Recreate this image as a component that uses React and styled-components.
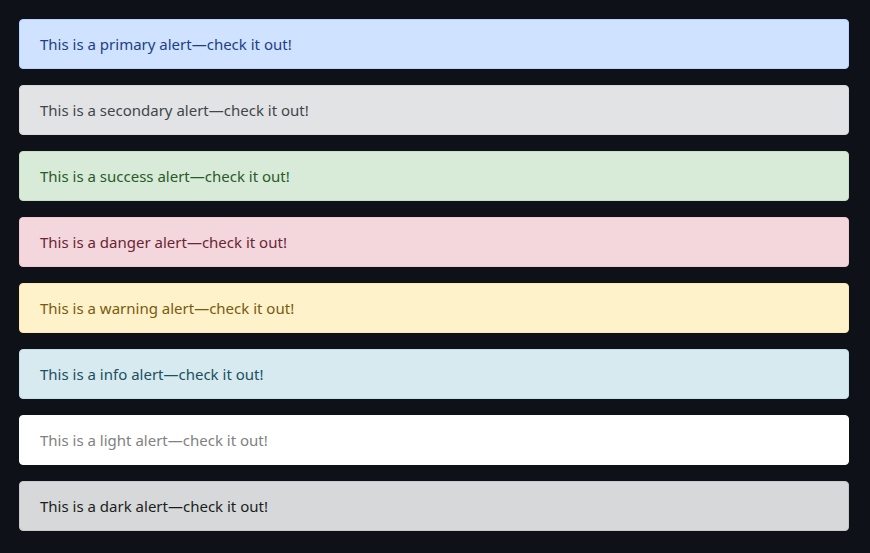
import React from "react"
import styled, { createGlobalStyle } from "styled-components"

const GlobalStyle = createGlobalStyle`
  html, body {
    margin: 0;
    padding: 0;
    background-color: #0f1118;
  }
  body {
    font-family: "Noto Sans", "Open Sans", sans-serif;
  }
`;

const variants = {
  primary: { bg: "#cfe2ff", border: "#b6d4fe", color: "#1d3f85" },
  secondary: { bg: "#e2e3e5", border: "#d6d8db", color: "#41464b" },
  success: { bg: "#d8ebd8", border: "#c8e0c8", color: "#2a5a2a" },
  danger: { bg: "#f3d7dc", border: "#efc9d0", color: "#6b2535" },
  warning: { bg: "#fdf2c9", border: "#fbe9b0", color: "#7a5a10" },
  info: { bg: "#d6eaf0", border: "#c3dfe8", color: "#20505e" },
  light: { bg: "#ffffff", border: "#fdfdfe", color: "#818182" },
  dark: { bg: "#d6d8da", border: "#c6c8ca", color: "#1b1e21" },
};

const Page = styled.div`
  display: flex;
  flex-direction: column;
  gap: 16px;
  padding: 19px 21px 22px 19px;
`;

const Alert = styled.div`
  padding: 12px 20px;
  font-size: 15px;
  line-height: 24px;
  border: 1px solid ${(p) => variants[p.$variant].border};
  border-radius: 4px;
  background-color: ${(p) => variants[p.$variant].bg};
  color: ${(p) => variants[p.$variant].color};
`;

export default function App() {
  return (
    <>
      <GlobalStyle />
      <Page>
        {Object.keys(variants).map((v) => (
          <Alert key={v} $variant={v}>
            This is a {v} alert—check it out!
          </Alert>
        ))}
      </Page>
    </>
  );
}
